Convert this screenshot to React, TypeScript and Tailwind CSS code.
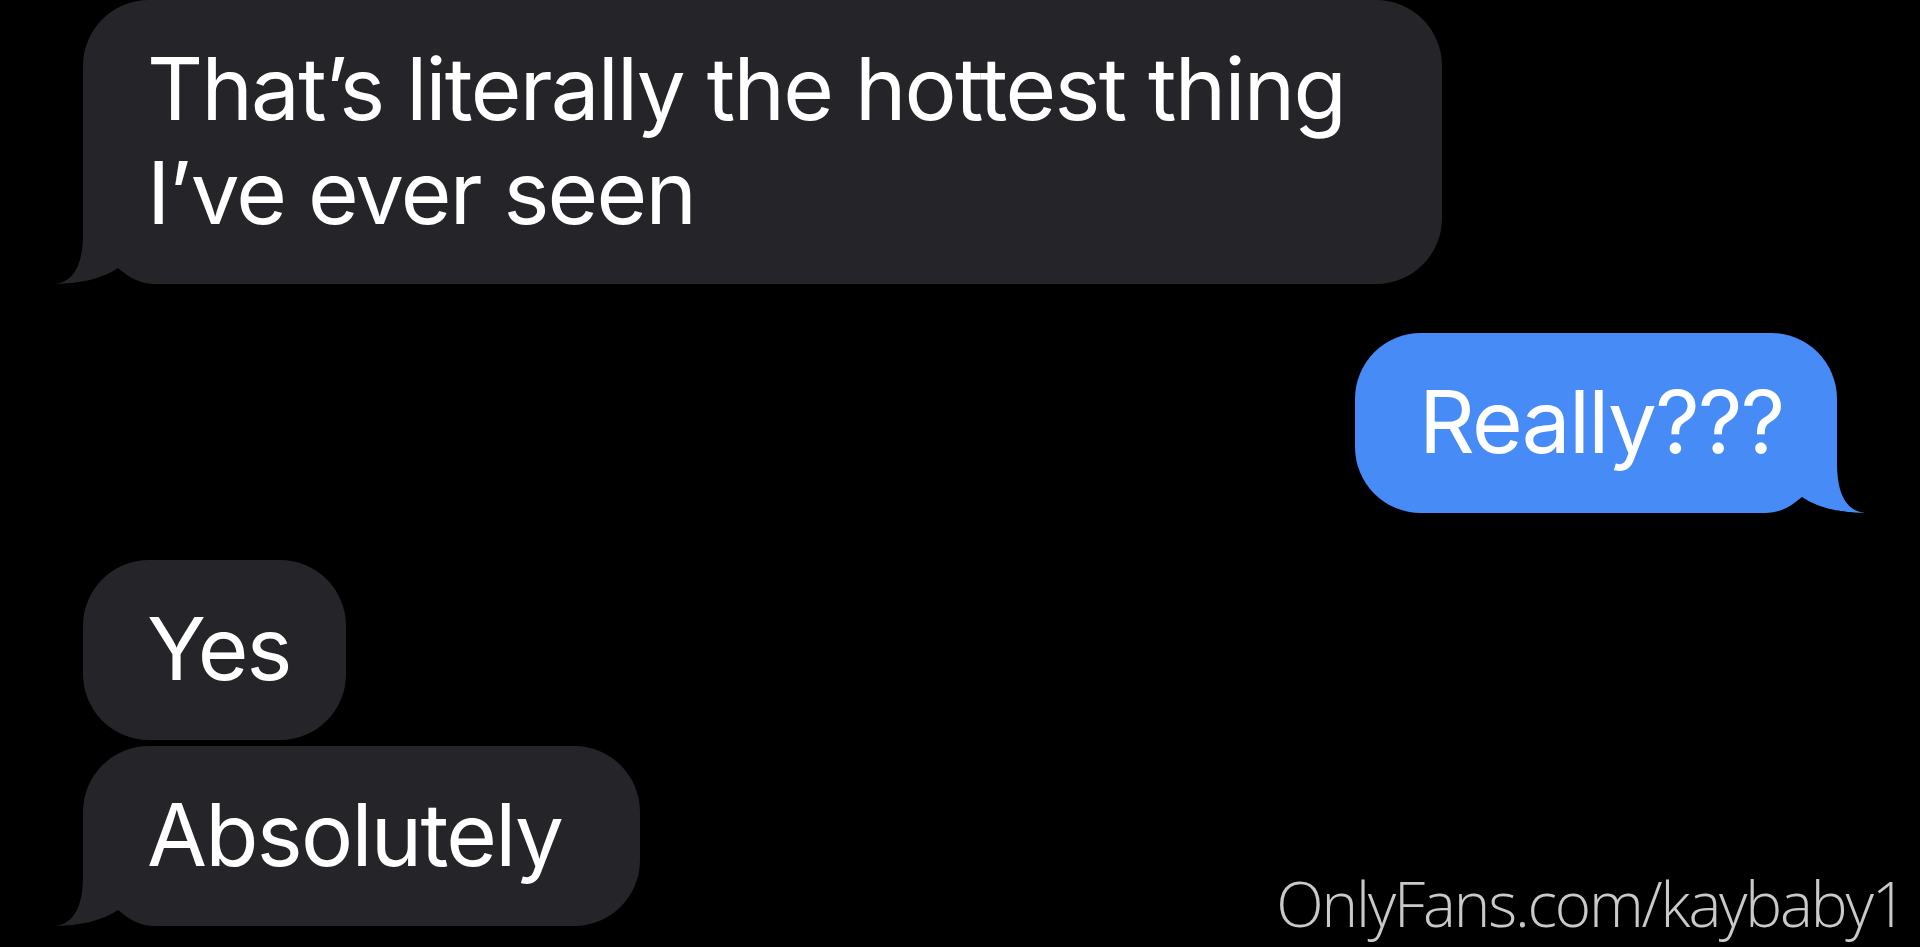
import React from 'react';

type Side = 'left' | 'right';

function Tail({ side, color }: { side: Side; color: string }) {
  // corner piece: tail tip sticks out 28px, notch cut back in black
  const pos = side === 'left' ? 'left-[-28px]' : 'right-[-28px] -scale-x-100';
  return (
    <svg
      className={`absolute bottom-0 ${pos}`}
      width="110"
      height="80"
      viewBox="0 0 110 80"
    >
      <path d="M28 0 L28 30 C28 62 18 78 0 80 C22 80 45 76 63 64 C75 74 85 80 100 80 L110 80 L110 0 Z" fill={color} />
      <path d="M0 80 C22 80 45 76 63 64 C75 74 85 80 100 80 Z" fill="#000000" />
    </svg>
  );
}

function Bubble({
  side,
  tail,
  width,
  children,
}: {
  side: Side;
  tail?: boolean;
  width: string;
  children: React.ReactNode;
}) {
  const color = side === 'left' ? '#252429' : '#478cf6';
  const bg = side === 'left' ? 'bg-[#252429] self-start' : 'bg-[#478cf6] self-end';
  const corner = tail ? (side === 'left' ? 'rounded-bl-none' : 'rounded-br-none') : '';
  return (
    <div className={`relative ${bg} ${width} rounded-[66px] ${corner} px-16 pt-[37px] pb-[39px]`}>
      <p className="relative z-10 text-white text-[87px] leading-[104px] tracking-[-0.02em] whitespace-nowrap">
        {children}
      </p>
      {tail && <Tail side={side} color={color} />}
    </div>
  );
}

export default function App() {
  return (
    <div
      className="relative h-[947px] w-full overflow-hidden bg-black"
      style={{ fontFamily: 'Inter, "Noto Sans", sans-serif' }}
    >
      <div className="flex flex-col px-[83px]">
        <Bubble side="left" tail width="w-[1359px]">
          That’s literally the hottest thing
          <br />
          I’ve ever seen
        </Bubble>

        <div className="mt-[49px] flex flex-col">
          <Bubble side="right" tail width="w-[482px]">
            Really???
          </Bubble>
        </div>

        <div className="mt-[47px] flex flex-col gap-[6px]">
          <Bubble side="left" width="w-[263px]">
            Yes
          </Bubble>
          <Bubble side="left" tail width="w-[557px]">
            Absolutely
          </Bubble>
        </div>
      </div>

      <span
        className="absolute right-[15px] bottom-[13px] text-[62px] leading-none font-light tracking-[-0.035em] text-[#c9c9c9]"
        style={{ fontFamily: '"Open Sans", sans-serif' }}
      >
        OnlyFans.com/kaybaby1
      </span>
    </div>
  );
}
